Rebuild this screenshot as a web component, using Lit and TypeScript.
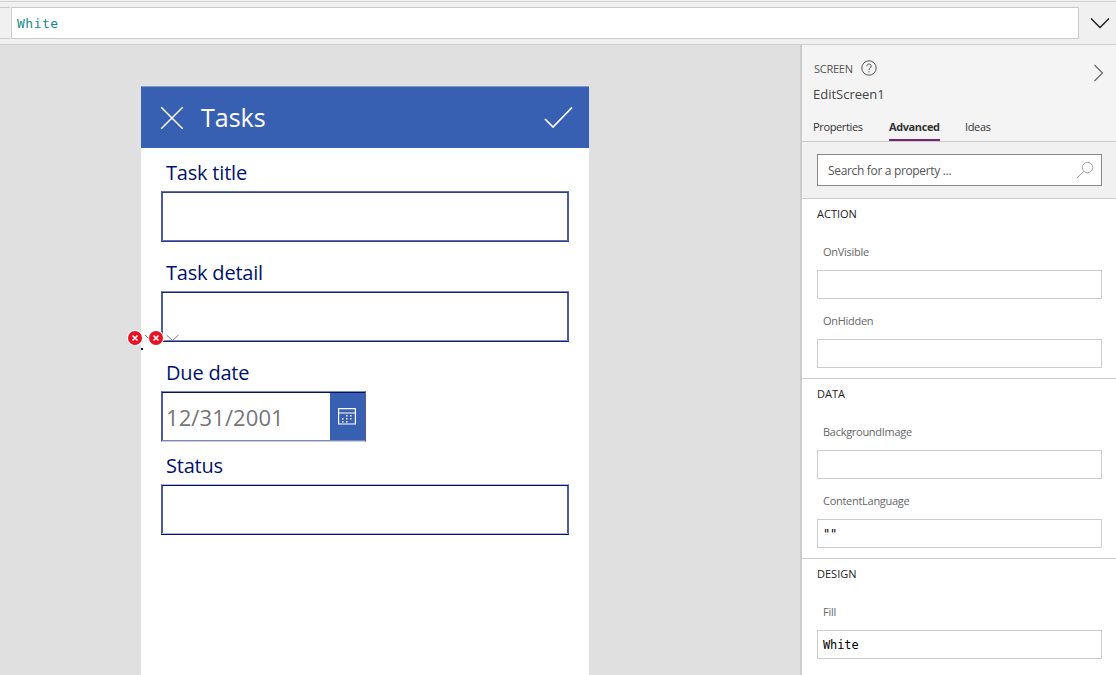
import { LitElement, html, svg, css } from "lit";
import { customElement, property } from "lit/decorators.js";

@customElement("property-field")
class PropertyField extends LitElement {
  @property() label = "";
  @property() value = "";
  static styles = css`
    :host { display: block; height: 69px; }
    .label { height: 20px; line-height: 20px; padding: 0 6px; font-size: 11px; letter-spacing: -0.28px; color: #666; }
    .box { box-sizing: border-box; height: 29px; margin-top: 8px; border: 1px solid #ccc; background: #fff;
      padding: 1px 5px 0; line-height: 27px; font-family: "DejaVu Sans Mono", monospace; font-size: 12px; letter-spacing: -0.1px; color: #000; white-space: pre; }
  `;
  render() {
    return html`<div class="label">${this.label}</div><div class="box">${this.value}</div>`;
  }
}

@customElement("app-root")
class AppRoot extends LitElement {
  static styles = css`
    :host { display: flex; flex-direction: column; width: 1116px; height: 675px; overflow: hidden; background: #e0e0e0;
      font-family: "Open Sans", "Noto Sans", sans-serif; }
    * { box-sizing: border-box; }
    svg { display: block; }
    .bar { flex: none; height: 45px; background: #f0f0f0; border-bottom: 1px solid #d0d0d0; display: flex; }
    .rule { height: 1px; margin-top: 1px; background: #d0d0d0; }
    .row { display: flex; padding-top: 5px; }
    .stub { width: 10px; height: 32px; border: solid #ccc; border-width: 1px 0; margin-right: 1px; }
    .formula { width: 1068px; height: 32px; border: 1px solid #ccc; background: #fff; padding: 1px 0 0 5px; line-height: 30px;
      font-family: "DejaVu Sans Mono", monospace; font-size: 13px; letter-spacing: 0.5px; color: #198a8a; }
    .barcol { width: 100%; }
    .chev { margin: 9px 0 0 11px; }
    .body { flex: 1; min-height: 0; display: flex; }
    .canvas { width: 800px; padding: 41px 0 0 141px; position: relative; }
    .phone { width: 448px; height: 100%; background: #fff; }
    .head { height: 62px; background: #3860b2; border-top: 1px solid #7f98cc; display: flex; align-items: center; padding: 0 16px 0 19px; color: #fff; }
    .title { font-size: 25px; line-height: 34px; padding-bottom: 2px; margin-left: 17px; flex: 1; }
    .form { padding: 7px 20px 0; }
    .label { height: 36px; line-height: 36px; padding-left: 5px; font-size: 20px; letter-spacing: -0.2px; color: #00126b; }
    .input { --light: #626fab; --dark: #303f8a; height: 51px; border: 1px solid; border-color: var(--light) #4d5a9c var(--dark);
      box-shadow: inset 0 1px var(--dark), inset 0 -1px var(--light), inset 1px 0 #4d5a9c, inset -1px 0 #4d5a9c; }
    .input.detail { --light: #7e89b9; --dark: #142378; }
    .input.status { --light: #b3b9d5; --dark: #00126b; }
    .field { height: 100px; }
    .field.due { height: 93px; }
    .date { width: 205px; height: 51px; display: flex; border: 1px solid; border-color: #7e89b9 #4d5a9c #c5cbe2; background: #fff;
      box-shadow: inset 0 1px #00126b, inset 0 -1px #7e89b9, inset 1px 0 #4d5a9c, inset -1px 0 #4d5a9c; padding: 1px; }
    .datetext { flex: 1; padding-left: 3px; font-size: 22px; line-height: 48px; letter-spacing: 0.1px; color: #767676; }
    .cal { width: 34px; background: #3860b2; display: flex; justify-content: center; align-items: center; }
    .errors { position: absolute; left: 127px; top: 285px; }
    .panel { width: 316px; border-left: 2px solid #ccc; background: #fff; color: #333; }
    .top { height: 97px; background: #f4f4f4; border-bottom: 1px solid #ccc; display: flex; }
    .info { width: 280px; padding: 13px 0 0 11px; display: flex; flex-direction: column; }
    .kind { display: flex; align-items: center; height: 20px; font-size: 11px; color: #555; gap: 8px; }
    .kind span { padding: 2px 0 0 1px; letter-spacing: -0.25px; }
    .name { font-size: 13px; line-height: 20px; margin-top: 7px; color: #444; }
    .tabs { display: flex; margin-top: 10px; font-size: 11px; line-height: 25px; letter-spacing: -0.36px; }
    .tab { height: 27px; width: 51px; margin-right: 25px; white-space: nowrap; }
    .tab.on { font-weight: 700; border-bottom: 2px solid #742774; letter-spacing: -0.4px; }
    .go { margin-top: 19px; }
    .search { height: 57px; background: #f1f1f1; border-bottom: 1px solid #ccc; padding: 12px 14px 0 15px; }
    .sbox { height: 32px; border: 1px solid #8a8a8a; background: #fff; display: flex; align-items: center; justify-content: space-between;
      padding: 0 7px 0 10px; font-size: 12px; letter-spacing: -0.33px; color: #555; }
    .section { height: 180px; border-bottom: 1px solid #ccc; padding: 0 14px 0 15px; }
    .sh { height: 43px; line-height: 30px; font-size: 11px; color: #222; }
  `;

  sections = [
    { name: "ACTION", fields: [["OnVisible", ""], ["OnHidden", ""]] },
    { name: "DATA", fields: [["BackgroundImage", ""], ["ContentLanguage", '""']] },
    { name: "DESIGN", fields: [["Fill", "White"]] },
  ];

  badge(x: number) {
    return svg`<circle cx=${x} cy="8" r="8" fill="#fff"/><circle cx=${x} cy="8" r="7" fill="#e81123"/>
      <path d="M${x - 2.5} 5.5l5 5m0-5l-5 5" stroke="#fff" stroke-width="1.6"/>`;
  }

  render() {
    const dots = [[9, 8], [13, 8], [5, 11], [9, 11], [13, 11], [5, 14], [9, 14]];
    return html`
      <div class="bar"><div class="barcol"><div class="rule"></div>
        <div class="row"><div class="stub"></div><div class="formula">White</div>
          <svg class="chev" width="20" height="14" fill="none" stroke="#222" stroke-width="1.5"><path d="M1 2.5l9 9l9-9"/></svg>
        </div></div></div>
      <div class="body">
        <div class="canvas">
          <div class="phone">
            <div class="head">
              <svg width="24" height="24" stroke="#fff" stroke-width="1.5"><path d="M1.2 1.2l21.5 21.5M22.7 1.2L1.2 22.7"/></svg>
              <div class="title">Tasks</div>
              <svg width="29" height="23" fill="none" stroke="#fff" stroke-width="1.7"><path d="M1 13l8 8L28 1.5"/></svg>
            </div>
            <div class="form">
              <div class="field"><div class="label">Task title</div><div class="input"></div></div>
              <div class="field"><div class="label">Task detail</div><div class="input detail"></div></div>
              <div class="field due"><div class="label">Due date</div>
                <div class="date"><div class="datetext">12/31/2001</div><div class="cal">
                  <svg width="18" height="17" fill="none" stroke="#fff"><path stroke-width="1.2" d="M.6 .6h16.8v15.4H.6zM.6 5h16.8"/>
                  ${dots.map(([x, y]) => svg`<rect x=${x - 1} y=${y - 1} width="1.5" height="1.5" fill="#fff" stroke="none"/>`)}</svg>
                </div></div></div>
              <div class="field"><div class="label">Status</div><div class="input status"></div></div>
            </div>
          </div>
          <svg class="errors" width="54" height="22" fill="none">
            <path d="M18 5l6 6 6-6M39.500 5l6 5.500 6-5.500" stroke="#777"/>${this.badge(8)}${this.badge(29)}
            <path d="M14 19h2" stroke="#00126b" stroke-width="2"/></svg>
        </div>
        <div class="panel">
          <div class="top"><div class="info">
            <div class="kind"><span>SCREEN</span>
              <svg width="16" height="16" fill="none" stroke="#555"><circle cx="8" cy="8" r="7.2"/><path d="M5.8 6.3a2.200 2.200 0 1 1 3.600 1.600C8.500 8.600 8 9 8 10M8 11.200v1.300"/></svg></div>
            <div class="name">EditScreen1</div>
            <div class="tabs"><div class="tab">Properties</div><div class="tab on">Advanced</div><div class="tab">Ideas</div></div>
          </div>
          <svg class="go" width="22" height="18" fill="none" stroke="#666" stroke-width="1.2"><path d="M12.500 1l8 8-8 8"/></svg></div>
          <div class="search"><div class="sbox"><span>Search for a property ...</span>
            <svg width="18" height="18" fill="none" stroke="#aaa"><circle cx="11.500" cy="6.500" r="5.200"/><path d="M7.800 10.200L1 17"/></svg></div></div>
          ${this.sections.map((s) => html`<div class="section"><div class="sh">${s.name}</div>
            ${s.fields.map(([l, v]) => html`<property-field .label=${l} .value=${v}></property-field>`)}</div>`)}
        </div>
      </div>`;
  }
}
